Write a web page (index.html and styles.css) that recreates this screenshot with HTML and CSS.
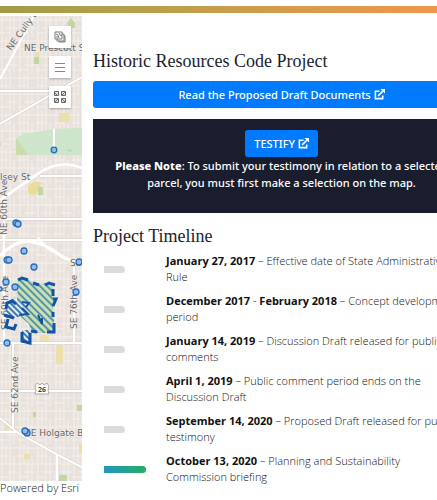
FILE: index.html
```html
<!DOCTYPE html>
<html lang="en">
<head>
<meta charset="utf-8">
<meta name="viewport" content="width=device-width, initial-scale=1">
<title>Historic Resources Code Project</title>
<link rel="stylesheet" href="styles.css">
</head>
<body>
<div class="page">
  <div class="rainbow"></div>
  <div class="columns">
    <aside class="map-column">
      <div class="map">
        <svg class="map-canvas" viewBox="0 16 82 465" preserveAspectRatio="xMinYMin slice" role="img" aria-label="Street map">
          <defs>
            <pattern id="blocks" width="18" height="37" patternUnits="userSpaceOnUse">
              <path d="M2 0V37M6 0V20M10 0V37M14 12V37M0 4H18M0 12H10M0 20H18M6 28H18M0 33H10" stroke="#f5f1ee" fill="none"/>
            </pattern>
            <pattern id="greenHatch" width="5" height="5" patternUnits="userSpaceOnUse" patternTransform="rotate(-45)">
              <rect width="5" height="5" fill="#c6e2b5"/>
              <path d="M1 0V5" stroke="#2365a5" stroke-width="1.3"/>
            </pattern>
            <pattern id="blueHatch" width="4" height="4" patternUnits="userSpaceOnUse" patternTransform="rotate(-45)">
              <rect width="4" height="4" fill="#e4ecf0"/>
              <path d="M1 0V4" stroke="#155da7" stroke-width="1.6"/>
            </pattern>
          </defs>
          <rect y="16" width="82" height="465" fill="#e9e1dc"/>
          <rect y="16" width="82" height="465" fill="url(#blocks)"/>
          <path d="M16 139L23 134L54 129L82 128V155H28L16 146Z" fill="#cce5cb"/>
          <path d="M16 138L28 155H16Z" fill="#cbdcaa"/>
          <path d="M66 149l7 1-3 2z" fill="#b2d3df"/>
          <path d="M28 186Q33 181 41 182Q40 192 34 195L28 193Z" fill="#eadc9b"/>
          <path d="M38 187h5v8h-5zM34 57h5v7h-5zM67 23l4-5 4 5v5h-7zM77 405h5v6h-5zM33 412h3v5h-3zM59 475h8v6h-8z" fill="#c1d7a2"/>
          <g fill="#ebdfaa">
            <path d="M59 113h10v9h-10zM35 52h4v5h-4zM0 141h2v5h-2zM40 335h9v7h-9zM56 345h7v19h-7zM24 454h6v5h-6zM5 424h4v6h-4zM79 444h3v9h-3z"/>
          </g>
          <g fill="none" stroke="#d3cdca" stroke-width="3">
            <path d="M0 200L39 173Q60 159 82 168M0 124L82 77M0 418L18 433L58 455L82 467"/>
            <path d="M0 91H50M40 176H82M0 219H82M0 240H82M0 343H82M0 391H82M13 343V429"/>
          </g>
          <g fill="none" stroke="#fff" stroke-width="2">
            <path d="M0 200L39 173Q60 159 82 168" stroke-width="3"/>
            <path d="M0 79L34 16M0 124L82 77M0 418L18 433L58 455L82 467"/>
            <path d="M0 91H50M40 176H82M0 219H82M0 240H82M0 343H82M0 391H82M13 343V429M0 432H17M57 455V481M4 201V343M74 267V343M54 129V148"/>
            <path d="M0 256Q17 238 33 242T57 253T82 263M38 238Q44 247 57 253" stroke-width="3"/>
          </g>
          <g class="street-names">
            <text transform="translate(11 51) rotate(-54)">NE Cully Blvd</text>
            <text x="24" y="51">NE Prescott St</text>
            <text x="0" y="180">lsey St</text>
            <text transform="translate(7 235) rotate(-90)">NE 60th Ave</text>
            <text transform="translate(8 330) rotate(-90)">SE 60th Ave</text>
            <text transform="translate(77 329) rotate(-90)">SE 76th Ave</text>
            <text transform="translate(18 413) rotate(-90)">SE 62nd Ave</text>
            <text x="70" y="266">SE</text>
            <text x="25" y="436">SE Holgate Blvd</text>
          </g>
          <path d="M18 279L27 278L36 284L53 283V303L54 321L52 333H32L29 324L20 316L21 307L17 303Z" fill="url(#greenHatch)"/>
          <path d="M6 303L15 297L16 302L27 303L28 314L15 318H6ZM22 330h8v13h-8z" fill="url(#blueHatch)"/>
          <g fill="none" stroke="#1153a4" stroke-width="3">
            <path d="M18 280L22 278L28 280M33 283L39 285M45 285L49 283L55 285M53 289V296M53 299H56L53 306M53 312V317M54 323V332H47M37 332L31 331M22 332L22 341L30 343L30 333M16 304L12 301L7 303L6 309M4 315L14 318M8 319L6 327L14 329L16 324"/>
            <path d="M22 302L29 303L26 307M22 308L28 314L19 315M38 315L42 324V318" stroke-width="2"/>
          </g>
          <g fill="#94bce8" stroke="#286dbb" stroke-width="1.3">
            <circle cx="54" cy="150" r="2.8"/><circle cx="16" cy="223" r="3"/><circle cx="18" cy="224" r="3"/>
            <circle cx="24" cy="251" r="3"/><circle cx="7" cy="260" r="3"/><circle cx="9" cy="260" r="3"/>
            <circle cx="34" cy="267" r="3"/><circle cx="79" cy="262" r="3"/><circle cx="6" cy="282" r="3"/>
            <circle cx="15" cy="287" r="3"/><circle cx="0" cy="289" r="2"/><circle cx="76" cy="292" r="3"/>
            <circle cx="7" cy="343" r="3"/><circle cx="27" cy="433" r="3"/><circle cx="25" cy="431" r="3"/>
          </g>
          <path d="M37 383L40 385L42 383L44 385L47 383L49 386Q47 390 49 394H35Q37 390 35 386Z" fill="#fff" stroke="#aaa"/>
          <text class="shield" x="42" y="392">26</text>
        </svg>
        <div class="map-tools">
          <button type="button" class="tool" aria-label="Layers">
            <svg viewBox="0 0 12 12"><path d="M1 1H8V8H1ZM8 3H10V10H3V8M10 5H11V11H5V10M2 3l2 1 1 3M5 2l1 2 2 1M2 6h2" fill="none" stroke="#777"/></svg>
          </button>
          <button type="button" class="tool" aria-label="Legend">
            <svg viewBox="0 0 12 12"><path d="M1 2.5H11M1 6.5H11M1 10.5H11" stroke="#888"/></svg>
          </button>
          <button type="button" class="tool" aria-label="Basemaps">
            <svg viewBox="0 0 12 12"><path d="M.5 .5H4.5V4.5H.5ZM7.5 .5H11.5V4.5H7.5ZM.5 7.5H4.5V11.5H.5ZM7.5 7.5H11.5V11.5H7.5Z" fill="#ddd" stroke="#666"/><path d="M1 2l2 2M8 4l3-3M1 11l3-3M8 8l3 3" fill="none" stroke="#777"/></svg>
          </button>
        </div>
      </div>
      <p class="credit">Powered by Esri</p>
    </aside>
    <main class="content">
      <h1 class="heading">Historic Resources Code Project</h1>
      <a class="button button-wide" href="#drafts">Read the Proposed Draft Documents
        <svg class="external" viewBox="0 0 12 12"><path d="M6 2.5H1.5V10.5H9.5V7M4.5 7.5L10 2" fill="none" stroke="currentColor" stroke-width="1.7"/><path d="M7 0H12V5Z" fill="currentColor"/></svg></a>
      <section class="notice">
        <a class="button" href="#testify">TESTIFY
          <svg class="external" viewBox="0 0 12 12"><path d="M6 2.5H1.5V10.5H9.5V7M4.5 7.5L10 2" fill="none" stroke="currentColor" stroke-width="1.7"/><path d="M7 0H12V5Z" fill="currentColor"/></svg></a>
        <p class="notice-text"><strong>Please Note</strong>: To submit your testimony in relation to a selected parcel, you must first make a selection on the map.</p>
      </section>
      <h2 class="heading">Project Timeline</h2>
      <ol class="timeline">
        <li class="event"><span class="marker"></span><p><strong>January 27, 2017</strong> – Effective date of State Administrative Rule</p></li>
        <li class="event"><span class="marker"></span><p><strong>December 2017</strong> - <strong>February 2018</strong> – Concept development period</p></li>
        <li class="event"><span class="marker"></span><p><strong>January 14, 2019</strong> – Discussion Draft released for public comments</p></li>
        <li class="event"><span class="marker"></span><p><strong>April 1, 2019</strong> – Public comment period ends on the Discussion Draft</p></li>
        <li class="event"><span class="marker"></span><p><strong>September 14, 2020</strong> – Proposed Draft released for public testimony</p></li>
        <li class="event"><span class="marker marker-active"></span><p><strong>October 13, 2020</strong> – Planning and Sustainability Commission briefing</p></li>
      </ol>
    </main>
  </div>
</div>
</body>
</html>
```
FILE: styles.css
```css
* { box-sizing: border-box; }

body {
  margin: 0;
  background: #fff;
  color: #111;
  font-family: "Open Sans", "Noto Sans", sans-serif;
  font-size: 11px;
  line-height: 17px;
  overflow-x: hidden;
}

p, h1, h2, ol { margin: 0; padding: 0; }

.page {
  display: flex;
  flex-direction: column;
  min-height: 100vh;
  padding-top: 6px;
  overflow: hidden;
}

.rainbow {
  height: 7px;
  margin-bottom: 3px;
  background: linear-gradient(90deg, #a29a47, #b0a04c 25%, #d99b4b 70%, #ee964b);
}

.columns {
  flex: 1;
  display: grid;
  grid-template-columns: 82px 1fr;
  column-gap: 11px;
}

.map-column {
  display: flex;
  flex-direction: column;
}

.map {
  position: relative;
  flex: 1;
  overflow: hidden;
}

.map-canvas {
  position: absolute;
  inset: 0;
  width: 100%;
  height: 100%;
}

.street-names {
  font-family: "DejaVu Sans", sans-serif;
  font-size: 9px;
  fill: #666;
  stroke: #f4f0ed;
  stroke-width: 1px;
  paint-order: stroke;
}

.shield {
  font-size: 7px;
  font-weight: 700;
  text-anchor: middle;
  fill: #444;
}

.map-tools {
  position: absolute;
  top: 10px;
  right: 11px;
  display: grid;
  gap: 8px;
}

.tool {
  display: grid;
  place-items: center;
  width: 22px;
  height: 22px;
  padding: 0;
  border: 0;
  background: #fff;
  box-shadow: 0 1px 2px rgba(0, 0, 0, 0.3);
}

.tool svg { width: 12px; height: 12px; }

.credit {
  height: 19px;
  font-weight: 300;
  line-height: 13px;
  white-space: nowrap;
}

.content {
  min-width: 0;
  margin-right: -33px;
  padding-top: 33px;
}

.heading {
  color: #1a1d2e;
  font-family: "Liberation Serif", serif;
  font-size: 18px;
  font-weight: 400;
  line-height: 24px;
}

.button {
  display: inline-block;
  padding: 5px 9px;
  border-radius: 3px;
  background: #007bff;
  color: #fff;
  font-family: "Noto Sans", sans-serif;
  font-weight: 500;
  text-align: center;
  text-decoration: none;
  vertical-align: top;
}

.button-wide {
  display: block;
  margin: 8px 0 11px;
}

.external {
  width: 11px;
  height: 11px;
  vertical-align: -1px;
}

.notice {
  margin-bottom: 11px;
  padding: 11px 17px 22px;
  background: #1a1d2e;
  color: #fff;
  font-family: "Noto Sans", sans-serif;
  font-weight: 500;
  text-align: center;
}

.notice strong { font-weight: 800; }

.timeline {
  display: grid;
  gap: 8px;
  padding: 5px 9px 0 11px;
  list-style: none;
  font-weight: 300;
  line-height: 16px;
}

.event {
  display: grid;
  grid-template-columns: 42px 1fr;
  column-gap: 20px;
  align-items: center;
}

.event strong { font-weight: 700; }

.marker {
  width: 21px;
  height: 7px;
  border-radius: 0 4px 4px 0;
  background: #dadbdd;
}

.marker-active {
  width: 42px;
  background: linear-gradient(90deg, #2596be, #27ae60);
}
```
